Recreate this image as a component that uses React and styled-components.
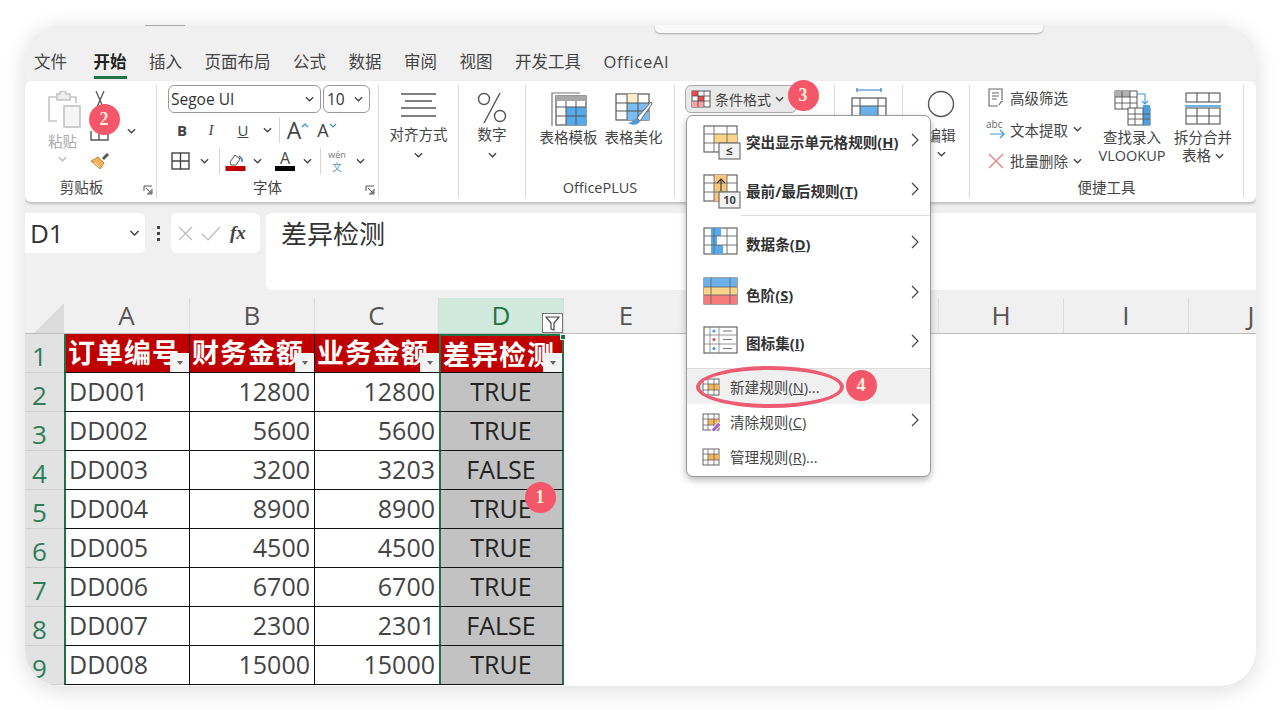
import React from "react";
import styled, { createGlobalStyle } from "styled-components";

const Global = createGlobalStyle`
  html, body { margin: 0; padding: 0; background: #fff; }
  body { font-family: "Open Sans", "Noto Sans CJK SC", sans-serif; color: #333; }
`;

const Page = styled.div`
  width: 1280px;
  height: 710px;
  padding: 25px 24px 24px 25px;
  box-sizing: border-box;
  overflow: hidden;
  position: relative;
`;

const Win = styled.div`
  width: 1231px;
  height: 661px;
  background: #f0f0f0;
  border-radius: 36px;
  box-shadow: 0 4px 22px rgba(0, 0, 0, 0.14);
  overflow: hidden;
  display: flex;
  flex-direction: column;
`;

const TitleBar = styled.div`
  height: 8px;
  flex: none;
  display: flex;
  align-items: flex-start;
`;

const TitlePill = styled.div`
  width: 40px;
  height: 1px;
  margin-left: 120px;
  background: #aaa;
`;

const SearchBox = styled.div`
  width: 388px;
  height: 8px;
  margin-left: 470px;
  background: #fafafa;
  border-radius: 0 0 5px 5px;
  box-shadow: 0 1px 2px rgba(0, 0, 0, 0.3);
`;

const Tabs = styled.div`
  height: 48px;
  flex: none;
  display: flex;
  align-items: flex-start;
  gap: 22.5px;
  padding: 17px 0 0 9px;
  box-sizing: border-box;
`;

const Tab = styled.div`
  font-size: 16.5px;
  line-height: 24px;
  height: 26px;
  color: ${(p) => (p.$active ? "#222" : "#444")};
  font-weight: ${(p) => (p.$active ? 700 : 400)};
  border-bottom: ${(p) => (p.$active ? "3px solid #217346" : "none")};
  margin-left: ${(p) => (p.$active ? "4px" : "0")};
  letter-spacing: ${(p) => (p.$latin ? "0.7px" : "0")};
`;

const Ribbon = styled.div`
  height: 121px;
  flex: none;
  background: #fff;
  border-radius: 6px;
  box-shadow: 0 2px 3px rgba(0, 0, 0, 0.22);
  display: flex;
  padding-top: 4px;
  box-sizing: border-box;
`;

const Group = styled.div`
  width: ${(p) => p.$w}px;
  height: 113px;
  flex: none;
  box-sizing: border-box;
  border-right: 1px solid #dcdcdc;
  display: flex;
  flex-direction: column;
  position: relative;
`;

const GroupBody = styled.div`
  height: 93px;
  flex: none;
  display: flex;
  box-sizing: border-box;
  padding: ${(p) => p.$pad || "0"};
  gap: ${(p) => p.$gap || 0}px;
`;

const GroupLabel = styled.div`
  height: 20px;
  font-size: 14.5px;
  line-height: 20px;
  color: #444;
  text-align: center;
  position: relative;
  padding-right: ${(p) => p.$pr || 0}px;
`;

const Launcher = styled.span`
  position: absolute;
  right: 3px;
  top: 7px;
  display: flex;
`;

const BigBtn = styled.div`
  width: ${(p) => p.$w}px;
  flex: none;
  display: flex;
  flex-direction: column;
  align-items: center;
  font-size: 14.5px;
  line-height: 18px;
  color: ${(p) => (p.$dim ? "#aaa" : "#444")};
  white-space: nowrap;
  padding-top: ${(p) => p.$top || 0}px;
`;

const IconSlot = styled.div`
  height: ${(p) => p.$h}px;
  display: flex;
  align-items: flex-start;
  justify-content: center;
  margin-left: ${(p) => p.$ml || 0}px;
  flex: none;
`;

const Chev = styled.svg.attrs({ viewBox: "0 0 10 6" })`
  width: ${(p) => p.$w || 9}px;
  height: 6px;
  fill: none;
  stroke: ${(p) => p.$color || "#444"};
  stroke-width: 1.5;
  flex: none;
  margin-top: ${(p) => p.$mt || 0}px;
  margin-left: ${(p) => p.$ml || 0}px;
`;
const ChevronD = (props) => (
  <Chev {...props}>
    <path d="M1 1l4 4 4-4" />
  </Chev>
);

const ClipSide = styled.div`
  width: 30px;
  display: flex;
  flex-direction: column;
  align-items: center;
  height: 88px;
`;

const ClipPiece = styled.div`
  margin-top: ${(p) => p.$mt}px;
  display: flex;
`;

const PasteLabel = styled.span`
  margin-top: 3px;
`;

const FontCol = styled.div`
  display: flex;
  flex-direction: column;
  padding-left: 11px;
`;

const FontSelects = styled.div`
  display: flex;
  gap: 2px;
  height: 28px;
`;

const Select = styled.div`
  width: ${(p) => p.$w}px;
  height: 28px;
  box-sizing: border-box;
  border: 1px solid #9a9a9a;
  border-radius: 6px;
  display: flex;
  align-items: center;
  justify-content: space-between;
  padding: 0 6px 0 ${(p) => p.$pl || 2}px;
  font-size: 15.5px;
  color: #333;
`;

const ToolRow = styled.div`
  display: flex;
  align-items: center;
  height: 30px;
  margin-top: ${(p) => p.$mt || 0}px;
`;

const ToolSlot = styled.div`
  width: ${(p) => p.$w}px;
  flex: none;
  display: flex;
  align-items: center;
  justify-content: center;
  font-size: ${(p) => p.$size || 15}px;
  color: #444;
  font-weight: ${(p) => (p.$bold ? 700 : 400)};
  font-style: ${(p) => (p.$italic ? "italic" : "normal")};
  text-decoration: ${(p) => (p.$under ? "underline" : "none")};
  font-family: ${(p) => (p.$serif ? '"Liberation Serif", serif' : "inherit")};
`;

const VSep = styled.div`
  width: 1px;
  height: 26px;
  background: #d5d5d5;
  flex: none;
`;

const SizeLetter = styled.span`
  font-size: ${(p) => p.$size}px;
  line-height: 26px;
  color: #444;
`;

const SizeMark = styled.svg.attrs({ viewBox: "0 0 8 5" })`
  width: 8px;
  height: 5px;
  fill: none;
  stroke: #3b8fc7;
  stroke-width: 1.2;
  align-self: flex-start;
  margin-top: 6px;
  flex: none;
`;

const ColorLetter = styled.div`
  display: flex;
  flex-direction: column;
  align-items: center;
  width: 20px;
  font-size: 16px;
  line-height: 15px;
  color: #444;
  i {
    display: block;
    width: 20px;
    height: 5px;
    background: #000;
  }
`;

const Wen = styled.div`
  display: flex;
  flex-direction: column;
  align-items: center;
  span {
    font-size: 9px;
    line-height: 12px;
    color: #777;
  }
  b {
    font-size: 10px;
    line-height: 13px;
    font-weight: 400;
    color: #5a9bd0;
  }
`;

const CondBtn = styled.div`
  width: 112px;
  height: 28px;
  box-sizing: border-box;
  margin: 0 0 0 10px;
  background: #e9e9e9;
  border: 1px solid #aaa;
  border-radius: 6px;
  display: flex;
  align-items: center;
  gap: 4px;
  padding-left: 5px;
  font-size: 14px;
  color: #444;
  white-space: nowrap;
`;

const Tools = styled.div`
  display: flex;
  flex-direction: column;
  width: 126px;
  flex: none;
  margin-top: -3px;
  padding-left: 16px;
  box-sizing: border-box;
`;

const ToolLine = styled.div`
  height: 31.5px;
  display: flex;
  align-items: center;
  font-size: 14.5px;
  color: #444;
  white-space: nowrap;
`;

const ToolIcon = styled.span`
  width: 24px;
  flex: none;
  display: flex;
  align-items: center;
  justify-content: flex-start;
  padding-left: ${(p) => p.$pl || 0}px;
  box-sizing: border-box;
`;

const TableMore = styled.span`
  display: flex;
  align-items: center;
  gap: 4px;
`;

const FormulaBar = styled.div`
  margin-top: 11px;
  height: 77px;
  flex: none;
  display: flex;
  align-items: flex-start;
`;

const NameBox = styled.div`
  width: 120px;
  height: 40px;
  background: #fff;
  border-radius: 0 6px 6px 0;
  box-sizing: border-box;
  padding: 0 5px 0 5px;
  display: flex;
  align-items: center;
  justify-content: space-between;
  font-size: 26px;
  color: #333;
`;

const Dots = styled.div`
  width: 26px;
  height: 40px;
  display: flex;
  flex-direction: column;
  align-items: center;
  justify-content: center;
  gap: 3px;
  i {
    width: 3px;
    height: 3px;
    background: #444;
    display: block;
  }
`;

const FxBox = styled.div`
  width: 89px;
  height: 40px;
  background: #fff;
  border-radius: 6px;
  display: flex;
  align-items: center;
  gap: 7px;
  padding-left: 6px;
  box-sizing: border-box;
  em {
    font-family: "Liberation Serif", serif;
    font-size: 19px;
    font-weight: 700;
    color: #444;
    margin-left: 2px;
  }
`;

const FormulaInput = styled.div`
  width: 990px;
  height: 77px;
  margin-left: 6px;
  background: #fff;
  border-radius: 6px 0 0 6px;
  box-sizing: border-box;
  padding: 1px 0 0 15px;
  font-size: 26px;
  line-height: 40px;
  color: #333;
`;

const ColHeaders = styled.div`
  margin-top: 8px;
  height: 36px;
  flex: none;
  display: flex;
  box-sizing: border-box;
  border-bottom: 1px solid #bcbcbc;
`;

const Corner = styled.div`
  width: 39px;
  flex: none;
  position: relative;
  &::after {
    content: "";
    position: absolute;
    right: 0;
    bottom: 0;
    border-style: solid;
    border-width: 0 0 30px 30px;
    border-color: transparent transparent #dcdcdc transparent;
  }
`;

const ColHead = styled.div`
  width: ${(p) => p.$w}px;
  flex: none;
  box-sizing: border-box;
  position: relative;
  border-right: 1px solid #dadada;
  background: ${(p) => (p.$sel ? "#cfe9dc" : "transparent")};
  color: ${(p) => (p.$sel ? "#217346" : "#555")};
  font-size: 26px;
  line-height: 35px;
  text-align: center;
`;

const FilterMark = styled.span`
  position: absolute;
  right: 0;
  bottom: 0;
  width: 21px;
  height: 20px;
  box-sizing: border-box;
  background: #fff;
  border: 1px solid #777;
  display: flex;
  align-items: center;
  justify-content: center;
`;

const Sheet = styled.div`
  flex: 1;
  background: #fff;
  overflow: hidden;
`;

const Grid = styled.div`
  display: grid;
  grid-template-columns: 39px 126px 125px 124px 125px;
  grid-auto-rows: 39px;
  width: 539px;
`;

const RowHead = styled.div`
  background: #e2e2e2;
  border-bottom: 1px solid #cfcfcf;
  box-sizing: border-box;
  color: #2f7d5b;
  font-size: 26px;
  line-height: 31px;
  padding: 7px 10px 0 0;
  text-align: center;
  overflow: hidden;
`;

const Cell = styled.div`
  box-sizing: border-box;
  position: relative;
  overflow: hidden;
  white-space: nowrap;
  font-size: 25px;
  line-height: 37px;
  padding: 0 4px 0 3px;
  color: ${(p) => (p.$sel ? "#222" : "#444")};
  text-align: ${(p) => p.$align || "left"};
  background: ${(p) => (p.$sel ? "#c2c2c2" : "#fff")};
  border-bottom: 1px solid #111;
  border-right: ${(p) => (p.$sel ? "2px solid #217346" : p.$noRight ? "none" : "1px solid #111")};
  border-left: ${(p) => (p.$first || p.$sel ? "2px solid #217346" : "none")};
`;

const HeadCell = styled(Cell)`
  background: #c00000;
  color: #fff;
  font-weight: 700;
  font-size: 27px;
  line-height: 37px;
  padding-left: 2px;
  text-align: left;
  overflow: visible;
  border-top: ${(p) => (p.$sel ? "2px solid #217346" : "none")};
  letter-spacing: 1px;
`;

const HeadClip = styled.div`
  overflow: hidden;
`;

const DropBtn = styled.span`
  position: absolute;
  right: 0;
  bottom: 0;
  width: 19px;
  height: 19px;
  background: #f4f4f4;
  display: flex;
  align-items: center;
  justify-content: center;
  &::after {
    content: "";
    border-style: solid;
    border-width: 4px 3.5px 0 3.5px;
    border-color: #666 transparent transparent transparent;
  }
`;

const Handle = styled.span`
  position: absolute;
  right: -4px;
  top: -2px;
  width: 6px;
  height: 6px;
  background: #217346;
  border: 1px solid #fff;
  box-sizing: border-box;
`;

const Menu = styled.div`
  position: absolute;
  left: 686px;
  top: 115px;
  width: 245px;
  height: 362px;
  box-sizing: border-box;
  background: #fff;
  border: 1px solid #9a9a9a;
  border-radius: 7px;
  box-shadow: 0 3px 7px rgba(0, 0, 0, 0.28);
  padding-top: 1px;
  display: flex;
  flex-direction: column;
`;

const BigItem = styled.div`
  height: ${(p) => p.$h}px;
  display: flex;
  align-items: center;
  padding-left: 16px;
  font-size: 14.6px;
  font-weight: 700;
  color: #333;
  flex: none;
  position: relative;
  svg {
    flex: none;
  }
`;

const SmallItem = styled.div`
  height: 35px;
  display: flex;
  align-items: center;
  padding-left: 14px;
  gap: 9px;
  font-size: 14.6px;
  color: #444;
  background: ${(p) => (p.$hot ? "#f0f0f0" : "transparent")};
  flex: none;
  position: relative;
  svg {
    flex: none;
  }
`;

const ItemLabel = styled.span`
  margin-left: ${(p) => p.$ml || 0}px;
  white-space: nowrap;
  u {
    text-decoration: underline;
  }
`;

const More = styled.svg.attrs({ viewBox: "0 0 8 14" })`
  position: absolute;
  right: 11px;
  top: 50%;
  margin-top: -9px;
  width: 8px;
  height: 14px;
  fill: none;
  stroke: #444;
  stroke-width: 1.2;
`;
const MoreIcon = () => (
  <More>
    <path d="M1 1l6 6-6 6" />
  </More>
);

const MenuSep = styled.div`
  height: 1px;
  background: #dcdcdc;
  margin-left: ${(p) => p.$ml || 0}px;
  flex: none;
`;

const Badge = styled.div`
  position: absolute;
  left: ${(p) => p.$x - 15.5}px;
  top: ${(p) => p.$y - 15.5}px;
  width: 31px;
  height: 31px;
  border-radius: 50%;
  background: #f4566a;
  color: #ffeedd;
  font-family: "Liberation Serif", serif;
  font-size: 18px;
  font-weight: 700;
  display: flex;
  align-items: center;
  justify-content: center;
`;

const Ring = styled.div`
  position: absolute;
  left: 696px;
  top: 366px;
  width: 148px;
  height: 42px;
  box-sizing: border-box;
  border: 4px solid #ee5c72;
  border-radius: 50%;
`;

/* drawings */

const PasteIcon = () => (
  <svg width="36" height="38" viewBox="0 0 36 38" fill="none" stroke="#c4c4c4" strokeWidth="1.6">
    <path d="M10 30H2V6h7M23 6h6v6" />
    <path d="M10 6V3h3a3 3 0 0 1 6 0h4v6H10z" fill="#eee" />
    <rect x="17" y="15" width="16" height="21" fill="#f6f6f6" />
  </svg>
);

const Scissors = () => (
  <svg width="14" height="20" viewBox="0 0 14 20" fill="none" stroke="#555" strokeWidth="1.3">
    <path d="M3 0l7 16M11 0L4 16" />
  </svg>
);

const CopyStub = () => (
  <svg width="20" height="10" viewBox="0 0 20 10" fill="none" stroke="#555" strokeWidth="1.4">
    <path d="M1 0v9h8V0M9 0v9h9V0" />
  </svg>
);

const Brush = () => (
  <svg width="20" height="19" viewBox="0 0 20 19">
    <path d="M1 10l7-4 6 6-4 6z" fill="#f2b15a" stroke="#c98a2e" />
    <path d="M5 12l4 4" stroke="#fff" />
    <path d="M12 7l5-5 2 2-5 5z" fill="#555" />
  </svg>
);

const LaunchIcon = () => (
  <svg width="10" height="10" viewBox="0 0 10 10" fill="none" stroke="#555" strokeWidth="1">
    <path d="M1 6V1h8M9 4v5H4M3 3l5 5M8 5v3H5" />
  </svg>
);

const BorderIcon = () => (
  <svg width="19" height="18" viewBox="0 0 19 18" fill="none" stroke="#444" strokeWidth="1.4">
    <rect x="1" y="1" width="17" height="16" />
    <path d="M9.5 1v16M1 9h17" />
  </svg>
);

const FillIcon = () => (
  <svg width="21" height="20" viewBox="0 0 21 20">
    <path d="M5 11l5-7 5 4-4 6H6z" fill="#fff" stroke="#555" />
    <path d="M14 5l3 3v3" fill="none" stroke="#2a6fb0" strokeWidth="1.4" />
    <rect x="0.5" y="15" width="20" height="5" fill="#c00000" />
  </svg>
);

const AlignIcon = () => (
  <svg width="37" height="28" viewBox="0 0 37 28" stroke="#555" strokeWidth="1.3">
    <path d="M1 2h35M5 9h27M1 16h35M1 24h35" />
  </svg>
);

const PercentIcon = () => (
  <svg width="32" height="32" viewBox="0 0 32 32" fill="none" stroke="#555" strokeWidth="1.4">
    <circle cx="8" cy="7" r="5.5" />
    <circle cx="24" cy="24" r="5.5" />
    <path d="M24 1L8 31" />
  </svg>
);

const TemplateIcon = () => (
  <svg width="36" height="35" viewBox="0 0 36 35" fill="none">
    <path d="M1 34V1h28" stroke="#777" strokeWidth="1.2" />
    <rect x="5" y="4" width="30" height="29" fill="#fff" stroke="#555" strokeWidth="1.2" />
    <rect x="5" y="4" width="30" height="5" fill="#a8a8a8" />
    <rect x="15" y="15" width="20" height="18" fill="#56a9ea" />
    <path d="M5 15h30M5 24h30M15 9v24M25 9v24" stroke="#555" strokeWidth="1" />
  </svg>
);

const BeautifyIcon = () => (
  <svg width="38" height="34" viewBox="0 0 38 34" fill="none">
    <rect x="1" y="2" width="33" height="26" stroke="#555" strokeWidth="1.2" />
    <rect x="12" y="2" width="11" height="9" fill="#fbeccb" />
    <rect x="12" y="11" width="22" height="17" fill="#7dbcf0" />
    <path d="M1 11h33M1 19h33M12 2v26M23 2v26" stroke="#555" strokeWidth="1" />
    <path d="M36 10L22 26l3 3L37 12z" fill="#fff" stroke="#666" />
    <path d="M22 26c-3 1-4 4-9 5 5 3 11 2 12-2z" fill="#4f9bd6" />
  </svg>
);

const CondIcon = () => (
  <svg width="20" height="18" viewBox="0 0 20 18" fill="none">
    <rect x="1" y="1" width="18" height="16" fill="#fff" stroke="#555" />
    <rect x="1" y="1" width="6" height="5" fill="#e94b4b" />
    <rect x="7" y="6" width="6" height="5" fill="#e94b4b" />
    <rect x="1" y="11" width="12" height="6" fill="#f5a3a3" />
    <path d="M7 1v16M13 1v16M1 6h18M1 11h18" stroke="#444" strokeWidth="0.8" />
  </svg>
);

const CellWidth = () => (
  <svg width="36" height="40" viewBox="0 0 36 40" fill="none">
    <path d="M6 3h24M6 1v4M30 1v4" stroke="#2a7cc7" strokeWidth="1.2" />
    <rect x="1" y="11" width="34" height="27" stroke="#555" strokeWidth="1.2" />
    <rect x="9" y="19" width="18" height="10" fill="#6bb2ec" />
    <path d="M1 19h34M1 29h34M9 11v27M27 11v27" stroke="#555" strokeWidth="1" />
  </svg>
);

const CircleIcon = () => (
  <svg width="28" height="28" viewBox="0 0 28 28" fill="none" stroke="#555" strokeWidth="1.4">
    <circle cx="14" cy="14" r="12.5" />
  </svg>
);

const FilterDocIcon = () => (
  <svg width="16" height="19" viewBox="0 0 16 19" fill="none" stroke="#666" strokeWidth="1.1">
    <path d="M14 12V1H1v17h9" />
    <path d="M4 5h7M4 8h7M4 11h5M11 17l2-3 2-1" />
  </svg>
);

const AbcIcon = () => (
  <svg width="20" height="22" viewBox="0 0 20 22" fill="none">
    <text x="0" y="10" fontSize="10" fill="#666" fontFamily="Open Sans">abc</text>
    <path d="M4 16h14M14 12l4 4-4 4" stroke="#3b9adf" strokeWidth="1.2" />
  </svg>
);

const CrossIcon = () => (
  <svg width="16" height="16" viewBox="0 0 16 16" stroke="#e58b8b" strokeWidth="1.5">
    <path d="M1 1l14 14M15 1L1 15" />
  </svg>
);

const LookupIcon = () => (
  <svg width="37" height="36" viewBox="0 0 37 36" fill="none">
    <rect x="1" y="1" width="22" height="18" fill="#fff" stroke="#555" />
    <rect x="1" y="1" width="15" height="6" fill="#b0b0b0" />
    <path d="M1 7h22M1 13h22M8 1v18M16 1v18" stroke="#555" strokeWidth="0.9" />
    <rect x="14" y="18" width="22" height="17" fill="#fff" stroke="#555" />
    <rect x="29" y="15" width="7" height="20" fill="#4c9fe0" />
    <path d="M14 24h22M14 29h22M21 18v17M29 18v17" stroke="#555" strokeWidth="0.9" />
    <path d="M23 4h8v10M28 11l3 3 3-3" stroke="#3b9adf" strokeWidth="1.1" />
  </svg>
);

const SplitIcon = () => (
  <svg width="36" height="33" viewBox="0 0 36 33" fill="none" stroke="#555" strokeWidth="1.1">
    <rect x="1" y="1" width="34" height="9" />
    <path d="M12 1v9M24 1v9" />
    <path d="M0 14h36" stroke="#3b9adf" strokeWidth="1.4" />
    <rect x="1" y="16" width="34" height="16" />
    <path d="M1 24h34M12 16v16M24 16v16" />
  </svg>
);

const FilterFunnel = () => (
  <svg width="15" height="15" viewBox="0 0 15 15" fill="none" stroke="#444" strokeWidth="1.2">
    <path d="M1 1h13L9 7v7l-3-1V7z" />
  </svg>
);

const MenuIconBase = ({ children, lines = true }) => (
  <svg width="38" height="36" viewBox="0 0 38 36" fill="none">
    <rect x="1" y="2" width="33" height="26" fill="#fff" stroke="#666" strokeWidth="1.2" />
    {children}
    {lines && <path d="M1 10h33M1 19h33M11 2v26M24 2v26" stroke="#666" strokeWidth="0.9" />}
  </svg>
);

const OverBox = ({ label, size = 10 }) => (
  <>
    <rect x="16" y="19" width="21" height="16" fill="#f2f2f2" stroke="#666" strokeWidth="1.1" />
    <text x="26.5" y="31" textAnchor="middle" fontSize={size} fill="#444" fontFamily="Open Sans">{label}</text>
  </>
);

const HighlightRuleIcon = () => (
  <svg width="38" height="36" viewBox="0 0 38 36" fill="none">
    <rect x="1" y="2" width="33" height="26" fill="#fff" stroke="#666" strokeWidth="1.2" />
    <rect x="11" y="10" width="23" height="9" fill="#fbd48a" />
    <path d="M1 10h33M1 19h33M11 2v26M24 2v26" stroke="#666" strokeWidth="0.9" />
    <OverBox label="≤" size={12} />
  </svg>
);

const TopRuleIcon = () => (
  <svg width="38" height="36" viewBox="0 0 38 36" fill="none">
    <rect x="1" y="2" width="33" height="26" fill="#fff" stroke="#666" strokeWidth="1.2" />
    <rect x="11" y="2" width="13" height="26" fill="#f9c77c" />
    <path d="M1 10h33M1 19h33M11 2v26M24 2v26" stroke="#666" strokeWidth="0.9" />
    <path d="M18 18V6M14 10l4-4 4 4" stroke="#333" strokeWidth="1.1" />
    <OverBox label="10" size={11} />
  </svg>
);

const DataBarIcon = () => (
  <MenuIconBase>
    <rect x="8" y="2" width="10" height="8" fill="#56a9ea" />
    <rect x="8" y="10" width="6" height="9" fill="#56a9ea" />
    <rect x="8" y="19" width="12" height="9" fill="#56a9ea" />
  </MenuIconBase>
);

const ScaleIcon = () => (
  <MenuIconBase lines={false}>
    <rect x="1" y="2" width="33" height="9" fill="#6bb2ec" />
    <rect x="1" y="11" width="33" height="8" fill="#fbd48a" />
    <rect x="1" y="19" width="33" height="9" fill="#f77b7b" />
    <path d="M1 11h33M1 19h33M8 2v26M27 2v26" stroke="#666" strokeWidth="0.9" />
  </MenuIconBase>
);

const IconSetIcon = () => (
  <MenuIconBase lines={false}>
    <path d="M1 10h33M1 19h33M7 2v26M16 2v26" stroke="#888" strokeWidth="0.9" />
    <circle cx="11" cy="6" r="1.6" fill="#3b9adf" />
    <circle cx="11" cy="14.5" r="1.6" fill="#e04b4b" />
    <circle cx="11" cy="23.5" r="1.6" fill="#3b9adf" />
    <path d="M20 6h9M20 14.5h9M20 23.5h9" stroke="#777" />
  </MenuIconBase>
);

const SmallGrid = ({ children }) => (
  <svg width="20" height="20" viewBox="0 0 20 20" fill="none">
    <rect x="2" y="2" width="16" height="16" fill="#fff" stroke="#666" />
    <rect x="7" y="7" width="11" height="6" fill="#f5b555" />
    <path d="M2 7h16M2 13h16M7 2v16M13 2v16" stroke="#666" strokeWidth="0.8" />
    {children}
  </svg>
);

const CellName = styled.span`
  display: block;
  overflow: hidden;
  width: 100%;
`;

const rows = [
  ["DD001", 12800, 12800, "TRUE"],
  ["DD002", 5600, 5600, "TRUE"],
  ["DD003", 3200, 3203, "FALSE"],
  ["DD004", 8900, 8900, "TRUE"],
  ["DD005", 4500, 4500, "TRUE"],
  ["DD006", 6700, 6700, "TRUE"],
  ["DD007", 2300, 2301, "FALSE"],
  ["DD008", 15000, 15000, "TRUE"],
];

const tabs = ["文件", "开始", "插入", "页面布局", "公式", "数据", "审阅", "视图", "开发工具", "OfficeAI"];
// F and G sit under the open menu, so they carry no letter
const columns = [["A", 126], ["B", 125], ["C", 124], ["D", 125], ["E", 125], ["", 125], ["", 125], ["H", 125], ["I", 125], ["J", 125]];

export default function App() {
  return (
    <Page>
      <Global />
      <Win>
        <TitleBar>
          <TitlePill />
          <SearchBox />
        </TitleBar>
        <Tabs>
          {tabs.map((t) => (
            <Tab key={t} $active={t === "开始"} $latin={t === "OfficeAI"}>{t}</Tab>
          ))}
        </Tabs>

        <Ribbon>
          <Group $w={132}>
            <GroupBody $pad="6px 0 0 22px" $gap={7}>
              <BigBtn $w={31} $dim>
                <IconSlot $h={39} $ml={5}><PasteIcon /></IconSlot>
                <PasteLabel>粘贴</PasteLabel>
                <ChevronD $mt={5} $color="#bbb" />
              </BigBtn>
              <ClipSide>
                <Scissors />
                <ClipPiece $mt={20}><CopyStub /></ClipPiece>
                <ClipPiece $mt={10}><Brush /></ClipPiece>
              </ClipSide>
              <ChevronD $mt={37} $ml={5} />
            </GroupBody>
            <GroupLabel $pr={18}>
              剪贴板
              <Launcher><LaunchIcon /></Launcher>
            </GroupLabel>
          </Group>

          <Group $w={222}>
            <GroupBody>
              <FontCol>
                <FontSelects>
                  <Select $w={153}>Segoe UI<ChevronD /></Select>
                  <Select $w={47} $pl={3}>10<ChevronD /></Select>
                </FontSelects>
                <ToolRow $mt={2}>
                  <ToolSlot $w={28} $bold>B</ToolSlot>
                  <ToolSlot $w={30} $italic $serif>I</ToolSlot>
                  <ToolSlot $w={34} $under>U</ToolSlot>
                  <ToolSlot $w={14}><ChevronD /></ToolSlot>
                  <ToolSlot $w={10}><VSep /></ToolSlot>
                  <ToolSlot $w={28}><SizeLetter $size={23}>A</SizeLetter><SizeMark><path d="M1 4l3-3 3 3" /></SizeMark></ToolSlot>
                  <ToolSlot $w={30}><SizeLetter $size={18}>A</SizeLetter><SizeMark><path d="M1 1l3 3 3-3" /></SizeMark></ToolSlot>
                </ToolRow>
                <ToolRow $mt={1}>
                  <ToolSlot $w={24}><BorderIcon /></ToolSlot>
                  <ToolSlot $w={24}><ChevronD /></ToolSlot>
                  <ToolSlot $w={6}><VSep /></ToolSlot>
                  <ToolSlot $w={26}><FillIcon /></ToolSlot>
                  <ToolSlot $w={18}><ChevronD /></ToolSlot>
                  <ToolSlot $w={38}><ColorLetter>A<i /></ColorLetter></ToolSlot>
                  <ToolSlot $w={6}><ChevronD /></ToolSlot>
                  <ToolSlot $w={20}><VSep /></ToolSlot>
                  <ToolSlot $w={14}><Wen><span>wén</span><b>文</b></Wen></ToolSlot>
                  <ToolSlot $w={32}><ChevronD /></ToolSlot>
                </ToolRow>
              </FontCol>
            </GroupBody>
            <GroupLabel>
              字体
              <Launcher><LaunchIcon /></Launcher>
            </GroupLabel>
          </Group>

          <Group $w={80}>
            <GroupBody $pad="7px 0 0 0">
              <BigBtn $w={79}>
                <IconSlot $h={34}><AlignIcon /></IconSlot>
                <span>对齐方式</span>
                <ChevronD $mt={8} />
              </BigBtn>
            </GroupBody>
            <GroupLabel />
          </Group>

          <Group $w={67}>
            <GroupBody $pad="7px 0 0 0">
              <BigBtn $w={66}>
                <IconSlot $h={34}><PercentIcon /></IconSlot>
                <span>数字</span>
                <ChevronD $mt={8} />
              </BigBtn>
            </GroupBody>
            <GroupLabel />
          </Group>

          <Group $w={149}>
            <GroupBody $pad="7px 0 0 13px" $gap={6}>
              <BigBtn $w={59}>
                <IconSlot $h={37}><TemplateIcon /></IconSlot>
                <span>表格模板</span>
              </BigBtn>
              <BigBtn $w={59}>
                <IconSlot $h={37}><BeautifyIcon /></IconSlot>
                <span>表格美化</span>
              </BigBtn>
            </GroupBody>
            <GroupLabel>OfficePLUS</GroupLabel>
          </Group>

          <Group $w={160}>
            <GroupBody>
              <CondBtn>
                <CondIcon />
                <span>条件格式</span>
                <ChevronD />
              </CondBtn>
            </GroupBody>
            <GroupLabel />
          </Group>

          <Group $w={68}>
            <GroupBody $pad="2px 0 0 16px">
              <CellWidth />
            </GroupBody>
            <GroupLabel />
          </Group>

          <Group $w={67}>
            <GroupBody $pad="5px 0 0 24px">
              <BigBtn $w={28}>
                <IconSlot $h={37}><CircleIcon /></IconSlot>
                <span>编辑</span>
                <ChevronD $mt={6} />
              </BigBtn>
            </GroupBody>
            <GroupLabel />
          </Group>

          <Group $w={274}>
            <GroupBody>
              <Tools>
                <ToolLine><ToolIcon $pl={2}><FilterDocIcon /></ToolIcon>高级筛选</ToolLine>
                <ToolLine><ToolIcon><AbcIcon /></ToolIcon>文本提取<ChevronD $ml={5} /></ToolLine>
                <ToolLine><ToolIcon $pl={2}><CrossIcon /></ToolIcon>批量删除<ChevronD $ml={5} /></ToolLine>
              </Tools>
              <BigBtn $w={72} $top={5}>
                <IconSlot $h={39}><LookupIcon /></IconSlot>
                <span>查找录入</span>
                <span>VLOOKUP</span>
              </BigBtn>
              <BigBtn $w={70} $top={7}>
                <IconSlot $h={37}><SplitIcon /></IconSlot>
                <span>拆分合并</span>
                <TableMore>表格<ChevronD /></TableMore>
              </BigBtn>
            </GroupBody>
            <GroupLabel>便捷工具</GroupLabel>
          </Group>
        </Ribbon>

        <FormulaBar>
          <NameBox>
            D1
            <ChevronD $w={11} />
          </NameBox>
          <Dots><i /><i /><i /></Dots>
          <FxBox>
            <svg width="17" height="17" viewBox="0 0 17 17" stroke="#bbb" strokeWidth="1.2">
              <path d="M2 2l13 13M15 2L2 15" />
            </svg>
            <svg width="20" height="15" viewBox="0 0 20 15" stroke="#bbb" strokeWidth="1.2" fill="none">
              <path d="M1 8l6 6L19 1" />
            </svg>
            <em>fx</em>
          </FxBox>
          <FormulaInput>差异检测</FormulaInput>
        </FormulaBar>

        <ColHeaders>
          <Corner />
          {columns.map(([c, w], i) => (
            <ColHead key={i} $w={w} $sel={c === "D"}>
              {c}
              {c === "D" && <FilterMark><FilterFunnel /></FilterMark>}
            </ColHead>
          ))}
        </ColHeaders>

        <Sheet>
          <Grid>
            <RowHead>1</RowHead>
            {["订单编号", "财务金额", "业务金额", "差异检测"].map((h, i) => (
              <HeadCell key={h} $first={i === 0} $sel={i === 3} $noRight={i === 2}>
                <HeadClip><CellName>{h}</CellName></HeadClip>
                <DropBtn />
                {i === 3 && <Handle />}
              </HeadCell>
            ))}
            {rows.map((r, i) => (
              <React.Fragment key={r[0]}>
                <RowHead>{i + 2}</RowHead>
                <Cell $first>{r[0]}</Cell>
                <Cell $align="right">{r[1]}</Cell>
                <Cell $align="right" $noRight>{r[2]}</Cell>
                <Cell $align="center" $sel>{r[3]}</Cell>
              </React.Fragment>
            ))}
          </Grid>
        </Sheet>
      </Win>

      <Menu>
        <BigItem $h={49}><HighlightRuleIcon /><ItemLabel $ml={5}>突出显示单元格规则(<u>H</u>)</ItemLabel><MoreIcon /></BigItem>
        <BigItem $h={49}><TopRuleIcon /><ItemLabel $ml={5}>最前/最后规则(<u>T</u>)</ItemLabel><MoreIcon /></BigItem>
        <MenuSep $ml={54} />
        <BigItem $h={55}><DataBarIcon /><ItemLabel $ml={5}>数据条(<u>D</u>)</ItemLabel><MoreIcon /></BigItem>
        <BigItem $h={46}><ScaleIcon /><ItemLabel $ml={5}>色阶(<u>S</u>)</ItemLabel><MoreIcon /></BigItem>
        <BigItem $h={51}><IconSetIcon /><ItemLabel $ml={5}>图标集(<u>I</u>)</ItemLabel><MoreIcon /></BigItem>
        <MenuSep />
        <SmallItem $hot><SmallGrid /><ItemLabel>新建规则(<u>N</u>)...</ItemLabel></SmallItem>
        <SmallItem>
          <SmallGrid>
            <path d="M10 18l7-8 3 3-7 7z" fill="#b060c8" stroke="#fff" />
          </SmallGrid>
          <ItemLabel>清除规则(<u>C</u>)</ItemLabel>
          <MoreIcon />
        </SmallItem>
        <SmallItem><SmallGrid /><ItemLabel>管理规则(<u>R</u>)...</ItemLabel></SmallItem>
      </Menu>

      <Ring />
      <Badge $x={104} $y={119}>2</Badge>
      <Badge $x={803} $y={95}>3</Badge>
      <Badge $x={861} $y={385}>4</Badge>
      <Badge $x={540} $y={497}>1</Badge>
    </Page>
  );
}
